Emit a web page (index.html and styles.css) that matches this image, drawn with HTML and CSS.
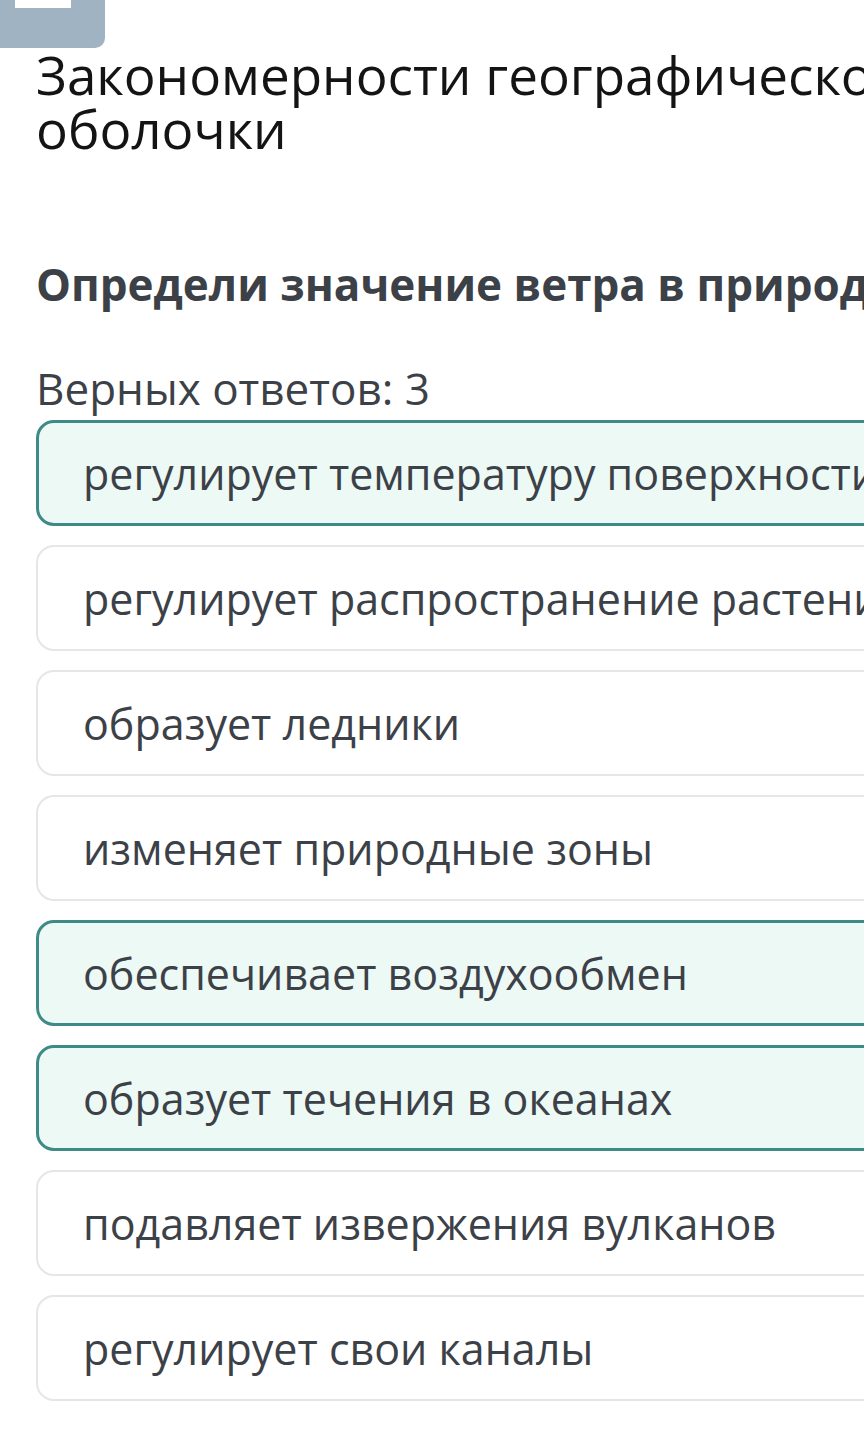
FILE: index.html
```html
<!DOCTYPE html>
<html lang="ru">
<head>
<meta charset="utf-8">
<link rel="stylesheet" href="styles.css">
</head>
<body>
<div class="page">
  <div class="topbtn"><span class="topbar"></span></div>
  <h1 class="title">Закономерности географической оболочки</h1>
  <h2 class="question">Определи значение ветра в природе</h2>
  <div class="count">Верных ответов: 3</div>
  <div class="options">
    <div class="option selected">регулирует температуру поверхности</div>
    <div class="option">регулирует распространение растений</div>
    <div class="option">образует ледники</div>
    <div class="option">изменяет природные зоны</div>
    <div class="option selected">обеспечивает воздухообмен</div>
    <div class="option selected">образует течения в океанах</div>
    <div class="option">подавляет извержения вулканов</div>
    <div class="option">регулирует свои каналы</div>
  </div>
</div>
</body>
</html>
```
FILE: styles.css
```css
html, body {
  margin: 0;
  padding: 0;
  background: #ffffff;
  overflow: hidden;
}
body {
  font-family: "Open Sans", "Noto Sans", sans-serif;
  color: #3c4148;
}
.page {
  width: 1300px;
  padding-left: 36px;
}
.topbtn {
  margin-left: -36px;
  width: 105px;
  height: 48px;
  background: #9fb3c2;
  border-radius: 0 0 10px 0;
  position: relative;
}
.topbar {
  position: absolute;
  left: 15px;
  top: 0;
  width: 56px;
  height: 8px;
  background: #ffffff;
}
.title {
  margin: 0;
  font-weight: 400;
  font-size: 53px;
  line-height: 54px;
  color: #141414;
  width: 1000px;
}
.question {
  margin: 98px 0 0 0;
  font-weight: 700;
  font-size: 44px;
  line-height: 60px;
  color: #3c4148;
  white-space: nowrap;
}
.count {
  margin-top: 48px;
  font-size: 44px;
  line-height: 52px;
  color: #3c4148;
}
.options {
  display: flex;
  flex-direction: column;
  gap: 19px;
  margin-top: 6px;
}
.option {
  box-sizing: border-box;
  height: 106px;
  width: 1100px;
  border: 2px solid #e4e6e8;
  border-radius: 18px;
  background: #ffffff;
  padding-left: 45px;
  display: flex;
  align-items: center;
  font-size: 43px;
  white-space: nowrap;
  color: #3c4148;
}
.option.selected {
  border: 3px solid #3d8a86;
  background: #edf9f5;
  padding-left: 44px;
}
```
